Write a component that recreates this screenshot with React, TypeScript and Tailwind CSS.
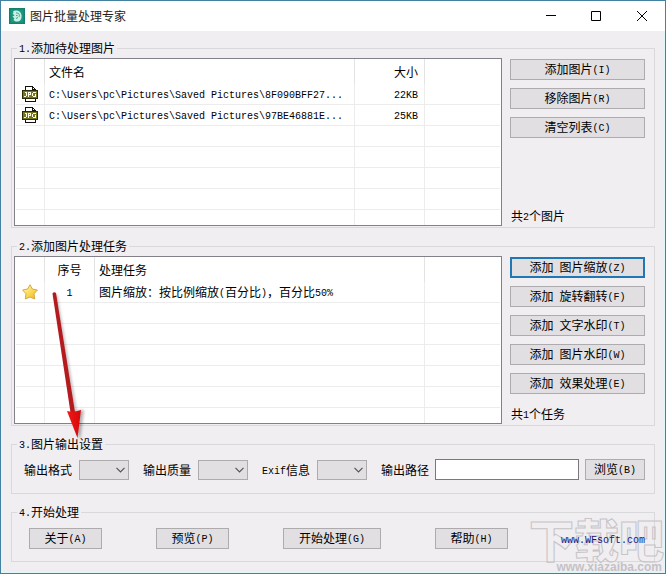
import React from "react";

const cjk = "font-['Noto_Sans_CJK_SC',sans-serif]";
const latin = "align-[1px] font-['Liberation_Mono','Noto_Sans_CJK_SC',monospace] text-[10px] leading-none whitespace-pre";

/* Mixed text: Chinese at 12px, Latin characters at half that advance. */
function T({ children }: { children: string }) {
  const runs = children.split(/([\x20-\x7e]+)/).filter((run) => run !== "");
  return (
    <>
      {runs.map((run, i) =>
        /^[\x20-\x7e]/.test(run) ? (
          <span key={i} className={latin}>{run}</span>
        ) : (
          <span key={i}>{run}</span>
        )
      )}
    </>
  );
}

function Button({ label, width = "w-full", focused = false }: { label: string; width?: string; focused?: boolean }) {
  return (
    <button
      type="button"
      className={`${width} h-[21px] shrink-0 whitespace-nowrap bg-[#e1dfe2] pb-0.5 text-center leading-[15px] ${
        focused ? "border-2 border-[#1f78b4]" : "border border-[#adabae]"
      }`}
    >
      <T>{label}</T>
    </button>
  );
}

function Group({ title, children }: { title: string; children: React.ReactNode }) {
  return (
    <fieldset className="min-w-0 border border-[#d9d8da]">
      <legend className="ml-[5px] h-[14px] px-[2px] leading-[14px] whitespace-nowrap">
        <T>{title}</T>
      </legend>
      {children}
    </fieldset>
  );
}

const head = "h-[25px] border-r border-[#e3e3e4] py-0 font-normal";
const cell = "h-[21px] border-r border-b border-[#ececed] py-0 whitespace-nowrap";
const lastCell = "h-[21px] border-b border-[#ececed] py-0";

function JpgIcon() {
  return (
    <svg width="16" height="16" viewBox="0 0 16 16" className="mx-auto block" shapeRendering="crispEdges" aria-label="JPG">
      <path d="M3.5 5V.5h7l3 3V5M3.5 11v4.5h10V11" fill="#fff" stroke="#111" />
      <path d="M10.500.5v3h3" fill="none" stroke="#111" />
      <rect x="0" y="4" width="16" height="9" fill="#2a2a08" />
      <rect x="1" y="5" width="14" height="7" fill="#77751c" />
      <path
        d="M3 6h2v1h-2zM4 7h1v3h-1zM2 10h2v1h-2zM6 6h1v5h-1zM7 6h2v1h-2zM8 7h1v1h-1zM7 8h2v1h-2zM11 6h3v1h-3zM10 7h1v3h-1zM11 10h3v1h-3zM13 8h1v2h-1z"
        fill="#fdfde8"
      />
    </svg>
  );
}

function StarIcon() {
  return (
    <svg width="16" height="16" viewBox="0 0 16 16" className="mx-auto block" aria-hidden="true">
      <defs>
        <linearGradient id="star" x1="0" y1="0" x2="1" y2="1">
          <stop offset="0" stopColor="#fffbd0" />
          <stop offset="0.5" stopColor="#fbdc55" />
          <stop offset="1" stopColor="#efb01c" />
        </linearGradient>
      </defs>
      <path
        d="M8 .8 10.400 5 15.400 6 12 9.800 12.700 15 8 13 3.300 15 4 9.800.6 6 5.600 5Z"
        fill="url(#star)"
        stroke="#d9a84a"
        strokeLinejoin="round"
      />
    </svg>
  );
}

const files = [
  { name: "C:\\Users\\pc\\Pictures\\Saved Pictures\\8F090BFF27...", size: "22KB" },
  { name: "C:\\Users\\pc\\Pictures\\Saved Pictures\\97BE46881E...", size: "25KB" },
];

function FileTable() {
  return (
    <div className="h-[168px] min-w-0 flex-1 overflow-hidden border border-[#828088] bg-white px-px">
      <table className="w-full table-fixed border-separate border-spacing-0">
        <colgroup>
          <col className="w-[29px]" />
          <col className="w-[310px]" />
          <col className="w-[70px]" />
          <col />
        </colgroup>
        <thead>
          <tr>
            <th className={head} />
            <th className={`${head} pl-1 text-left`}>文件名</th>
            <th className={`${head} pr-1.5 text-right`}>大小</th>
            <th className="h-[25px]" />
          </tr>
        </thead>
        <tbody>
          {Array.from({ length: 7 }, (_, i) => (
            <tr key={i}>
              <td className={cell}>{files[i] && <JpgIcon />}</td>
              <td className={`${cell} pl-1`}>{files[i] && <T>{files[i].name}</T>}</td>
              <td className={`${cell} pr-1.5 text-right`}>{files[i] && <T>{files[i].size}</T>}</td>
              <td className={lastCell} />
            </tr>
          ))}
        </tbody>
      </table>
    </div>
  );
}

function TaskTable() {
  return (
    <div className="h-[168px] min-w-0 flex-1 overflow-hidden border border-[#828088] bg-white px-px">
      <table className="w-full table-fixed border-separate border-spacing-0">
        <colgroup>
          <col className="w-[29px]" />
          <col className="w-[50px]" />
          <col className="w-[330px]" />
          <col />
        </colgroup>
        <thead>
          <tr>
            <th className={head} />
            <th className={`${head} text-center`}>序号</th>
            <th className={`${head} pl-1 text-left`}>处理任务</th>
            <th className="h-[25px]" />
          </tr>
        </thead>
        <tbody>
          {Array.from({ length: 7 }, (_, i) => (
            <tr key={i}>
              <td className={cell}>{i === 0 && <StarIcon />}</td>
              <td className={`${cell} text-center`}>{i === 0 && <T>1</T>}</td>
              <td className={`${cell} pl-1`}>{i === 0 && <T>图片缩放：按比例缩放(百分比)，百分比50%</T>}</td>
              <td className={lastCell} />
            </tr>
          ))}
        </tbody>
      </table>
    </div>
  );
}

function Combo({ id, label }: { id: string; label: string }) {
  return (
    <div className="flex items-center gap-[7px]">
      <label htmlFor={id} className="w-12 whitespace-nowrap"><T>{label}</T></label>
      <div className="grid h-5 w-[50px] items-center">
        <select id={id} className="col-start-1 row-start-1 h-5 w-full appearance-none border border-[#adabae] bg-[#e1dfe2]" />
        <svg width="9" height="6" viewBox="0 0 9 6" className="pointer-events-none col-start-1 row-start-1 mr-1 justify-self-end" aria-hidden="true">
          <path d="M.5.8 4.500 4.800 8.500.8" fill="none" stroke="#555" strokeWidth="1.200" />
        </svg>
      </div>
    </div>
  );
}

function TitleBar() {
  return (
    <header className="flex h-[30px] items-center bg-white pl-2">
      <svg width="16" height="16" viewBox="0 0 16 16" aria-hidden="true">
        <rect width="16" height="16" fill="#15806c" />
        <rect x="1.500" y="1.500" width="13" height="13" fill="#19977f" />
        <path d="M4 3.500C6 1.500 12 2.500 12.500 7c.4 3-.5 6-3.500 6.500-2 .3-4.500-.5-4.500-2l1-1-2-2 2-1-2-2 1-.5Z" fill="#c9eee3" />
        <path d="M7 5c3-.5 4 2 3 4M7 10.500l2-1M7 7.500h1.500" fill="none" stroke="#3aa58f" />
      </svg>
      <h1 className="ml-[5px] flex-1 text-[#222]">图片批量处理专家</h1>
      <button type="button" aria-label="最小化" className="grid h-full w-[46px] place-items-center">
        <svg width="10" height="10" viewBox="0 0 10 10"><path d="M0 4.500h10" stroke="#000" /></svg>
      </button>
      <button type="button" aria-label="最大化" className="grid h-full w-11 place-items-center">
        <svg width="10" height="10" viewBox="0 0 10 10"><path d="M.5.5h9v9h-9z" fill="none" stroke="#000" /></svg>
      </button>
      <button type="button" aria-label="关闭" className="grid h-full w-[47px] place-items-center">
        <svg width="10" height="10" viewBox="0 0 10 10"><path d="m0 0 10 10M10 0 0 10" stroke="#000" /></svg>
      </button>
    </header>
  );
}

export default function App() {
  return (
    <div className={`${cjk} relative flex min-h-screen flex-col overflow-hidden border border-[#4381a0] bg-[#f0eef1] text-xs leading-4 text-black`}>
      <TitleBar />
      <main className="flex flex-1 flex-col gap-[11px] border-x border-b border-[#dff6fd] px-[9px] pt-[10px] pb-[10px]">
        <Group title="1.添加待处理图片">
          <div className="flex gap-2 pt-[3px] pr-[9px] pb-px pl-[2px]">
            <FileTable />
            <div className="flex w-[135px] flex-col gap-2 pt-px">
              <Button label="添加图片(I)" />
              <Button label="移除图片(R)" />
              <Button label="清空列表(C)" />
              <p className="mt-auto mb-[2px] pl-px"><T>共2个图片</T></p>
            </div>
          </div>
        </Group>

        <Group title="2.添加图片处理任务">
          <div className="flex gap-2 pt-[3px] pr-[9px] pb-px pl-[2px]">
            <TaskTable />
            <div className="flex w-[135px] flex-col gap-2 pt-px">
              <Button label="添加 图片缩放(Z)" focused />
              <Button label="添加 旋转翻转(F)" />
              <Button label="添加 文字水印(T)" />
              <Button label="添加 图片水印(W)" />
              <Button label="添加 效果处理(E)" />
              <p className="mt-auto mb-[2px] pl-px"><T>共1个任务</T></p>
            </div>
          </div>
        </Group>

        <Group title="3.图片输出设置">
          <div className="flex items-center pt-2 pr-[9px] pb-[13px] pl-3">
            <div className="flex gap-[14px]">
              <Combo id="format" label="输出格式" />
              <Combo id="quality" label="输出质量" />
              <Combo id="exif" label="Exif信息" />
            </div>
            <label htmlFor="path" className="ml-[14px] whitespace-nowrap">输出路径</label>
            <input id="path" type="text" className="mx-[6px] h-[21px] min-w-0 flex-1 border border-[#7a787b] bg-white px-1" />
            <Button label="浏览(B)" width="w-[60px]" />
          </div>
        </Group>

        <Group title="4.开始处理">
          <div className="flex items-center justify-between pt-[9px] pr-[9px] pb-3 pl-[17px]">
            <div className="flex gap-[54px]">
              <Button label="关于(A)" width="w-[73px]" />
              <Button label="预览(P)" width="w-[73px]" />
              <Button label="开始处理(G)" width="w-[98px]" />
              <Button label="帮助(H)" width="w-[73px]" />
            </div>
            <a href="#wfsoft" className="relative z-10 text-[#15157c]"><T>www.WFsoft.com</T></a>
          </div>
        </Group>
      </main>

      {/* Pointer from the task row to the output settings */}
      <svg width="50" height="160" viewBox="0 0 50 160" className="pointer-events-none absolute top-[284px] left-[43px]" aria-hidden="true">
        <defs>
          <filter id="soft" x="-50%" y="-10%" width="200%" height="120%"><feGaussianBlur stdDeviation="1.500" /></filter>
          <linearGradient id="tip" x1="0" y1="0" x2="1" y2="0">
            <stop offset="0" stopColor="#f01818" />
            <stop offset="1" stopColor="#d80808" />
          </linearGradient>
        </defs>
        <path d="M8 8 11 7.500 30.500 124 38 123 34 153 23 126 28 125Z" fill="#000" opacity="0.3" filter="url(#soft)" transform="translate(2 2)" />
        <path d="M8.500 8.500Q10 6.500 12 8L31 127 26.500 127.500Z" fill="#b51a1e" />
        <path d="M23 126Q29 128 37 125L33.500 153Z" fill="url(#tip)" />
      </svg>

      {/* Site watermark */}
      <div className="pointer-events-none absolute right-px bottom-0 flex flex-col items-end" aria-hidden="true">
        <p className="text-[45px] leading-[44px] font-black whitespace-nowrap text-transparent [-webkit-text-stroke:1px_#c6c4c7]">下载吧</p>
        <p className="pr-[2px] font-['Liberation_Sans',sans-serif] text-xs leading-3 font-bold text-[#c4c2c5]">www.xiazaiba.com</p>
      </div>
    </div>
  );
}
